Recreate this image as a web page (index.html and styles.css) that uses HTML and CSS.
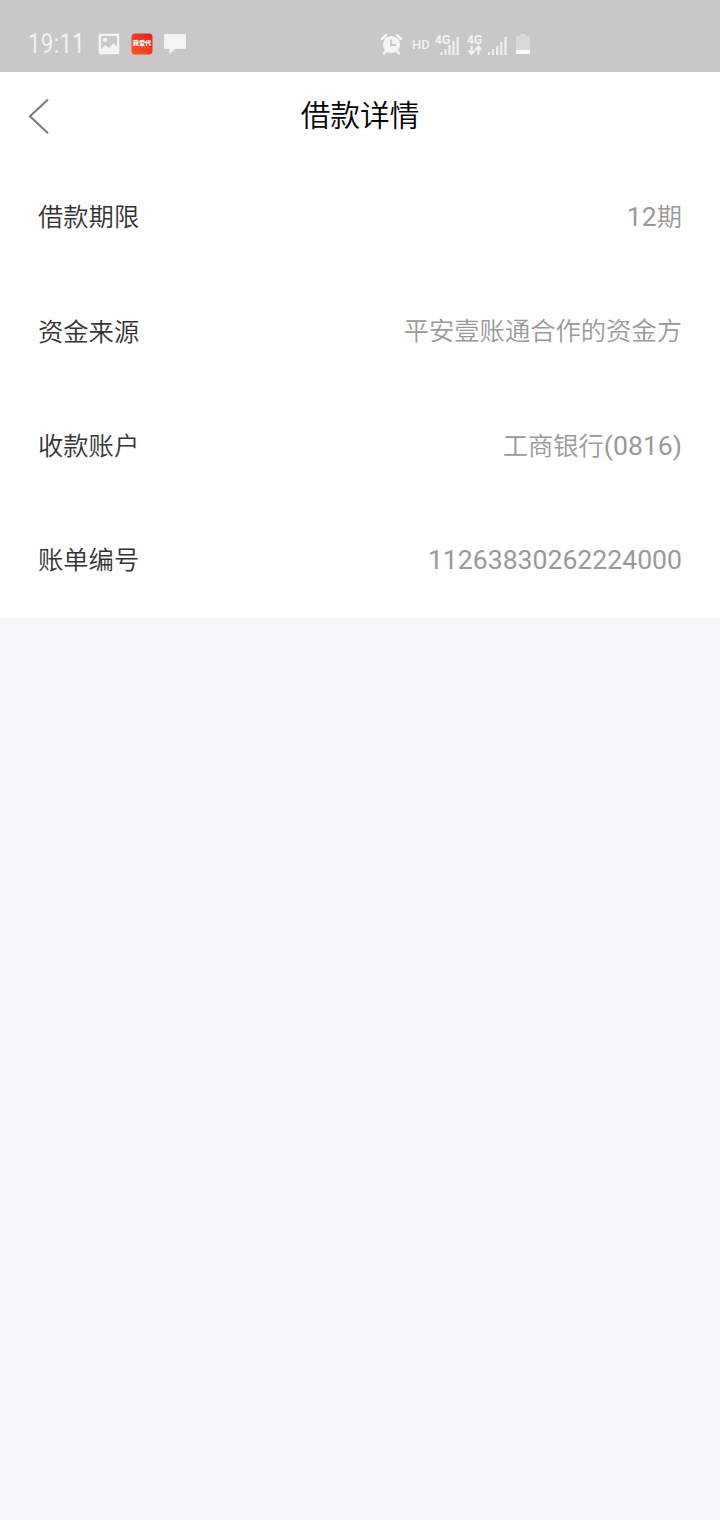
FILE: index.html
```html
<!DOCTYPE html>
<html lang="zh-CN">
<head>
  <meta charset="UTF-8">
  <meta name="viewport" content="width=device-width, initial-scale=1.0">
  <title>借款详情</title>
  <link rel="stylesheet" href="styles.css">
</head>
<body>
  <div class="status-bar">
    <div class="status-left">
      <span class="time">19:11</span>
      <svg class="icon-photo" width="22" height="22" viewBox="0 0 22 22">
        <path fill="#f3f3f3" fill-rule="evenodd" d="M2.200 0.800h17.600a1.500 1.500 0 0 1 1.500 1.500v17.400a1.500 1.500 0 0 1-1.500 1.500H2.200a1.500 1.500 0 0 1-1.500-1.500V2.300A1.500 1.500 0 0 1 2.200 0.800zM3 3v13l4.500-4 3.500 3 4.500-5 3.500 4V3z"/>
        <circle cx="7" cy="7" r="2.2" fill="#f3f3f3"/>
      </svg>
      <svg class="icon-app" width="22" height="22" viewBox="0 0 22 22">
        <defs>
          <linearGradient id="appBg" x1="0" y1="1" x2="1" y2="0">
            <stop offset="0" stop-color="#fb5a1c"/>
            <stop offset="1" stop-color="#e51c20"/>
          </linearGradient>
        </defs>
        <rect x="0.5" y="0.5" width="21" height="21" rx="3.5" fill="url(#appBg)"/>
        <text x="11" y="11.8" text-anchor="middle" class="app-name">我爱代</text>
        <path d="M4 14.7h14" stroke="#ff9377" stroke-width="0.6" stroke-dasharray="1.5 1.5"/>
      </svg>
      <svg class="icon-chat" width="24" height="22" viewBox="0 0 24 22">
        <path fill="#f3f3f3" d="M2.500 1h19A1.500 1.500 0 0 1 23 2.500v12a1.500 1.500 0 0 1-1.500 1.500H12l-5.500 5.500V16h-4A1.500 1.500 0 0 1 1 14.500v-12A1.500 1.500 0 0 1 2.500 1z"/>
      </svg>
    </div>
    <div class="status-right">
      <svg class="icon-alarm" width="24" height="22" viewBox="0 0 24 22">
        <circle cx="11.500" cy="11.500" r="8.600" fill="#f5f5f5"/>
        <path d="M1.800 6l4.200-4M21.200 6l-4.200-4M6 18l-2 2.500M17 18l2 2.500" stroke="#f5f5f5" stroke-width="2.500" stroke-linecap="round"/>
        <path d="M11 6.500v5.500h5" fill="none" stroke="#c8c8c8" stroke-width="1.800"/>
      </svg>
      <span class="hd">HD</span>
      <svg class="icon-signal" width="26" height="24" viewBox="0 0 26 24">
        <text x="0" y="12" class="network">4G</text>
        <path d="M6.500 23v-3M10.500 23v-6M14.500 23v-10M18.500 23v-14M22.700 23v-18" stroke="#f0f0f0" stroke-width="2.200"/>
      </svg>
      <svg class="icon-data" width="42" height="24" viewBox="0 0 42 24">
        <text x="0" y="12" class="network">4G</text>
        <path d="M4.500 14v7M1.500 18.500l3 3.500 3-3.500M11.500 22.500v-7M8.500 18l3-3.500 3 3.500" fill="none" stroke="#f3f3f3" stroke-width="2"/>
        <path d="M22 23v-3M26 23v-6M30.200 23v-9M34.300 23v-13M38.500 23v-18" stroke="#f0f0f0" stroke-width="2.200"/>
      </svg>
      <svg class="icon-battery" width="16" height="22" viewBox="0 0 16 22">
        <path fill="#dadada" d="M5 1h6v2h2.500A1.500 1.500 0 0 1 15 4.500V17H1V4.500A1.500 1.500 0 0 1 2.500 3H5z"/>
        <path fill="#fafafa" d="M1 17h14v3a1 1 0 0 1-1 1H2a1 1 0 0 1-1-1z"/>
      </svg>
    </div>
  </div>

  <header class="header">
    <svg class="back" width="24" height="38" viewBox="0 0 24 38">
      <path d="M21 2.500L3 19.300l18 17" fill="none" stroke="#7c7c7c" stroke-width="2.100"/>
    </svg>
    <h1 class="title">借款详情</h1>
  </header>

  <div class="list">
    <div class="row">
      <span class="label">借款期限</span>
      <span class="value"><span class="num">12</span>期</span>
    </div>
    <div class="row">
      <span class="label">资金来源</span>
      <span class="value">平安壹账通合作的资金方</span>
    </div>
    <div class="row">
      <span class="label">收款账户</span>
      <span class="value">工商银行<span class="num">(0816)</span></span>
    </div>
    <div class="row">
      <span class="label">账单编号</span>
      <span class="value"><span class="num">11263830262224000</span></span>
    </div>
  </div>
</body>
</html>
```
FILE: styles.css
```css
body {
  margin: 0;
  min-height: 100vh;
  background-color: #f6f7f9;
  font-family: Roboto, "Noto Sans CJK SC DemiLight", "Noto Sans CJK SC", sans-serif;
}

.status-bar {
  display: flex;
  height: 72px;
  padding-top: 16px;
  box-sizing: border-box;
  background-color: #c8c8c8;
  color: #f3f3f3;
}

.status-left,
.status-right {
  display: flex;
  align-items: center;
}

.status-left {
  width: 352px;
  padding-left: 28px;
}

.time {
  width: 70px;
  font-size: 27px;
  font-weight: 400;
  letter-spacing: 0.5px;
  white-space: nowrap;
  transform: scaleX(0.82);
  transform-origin: left center;
}

.icon-app {
  margin-left: 11px;
}

.icon-chat {
  margin-left: 10px;
}

.app-name {
  font-family: "Noto Sans CJK SC", sans-serif;
  font-size: 6.2px;
  font-weight: 900;
  fill: #fff;
}

.hd {
  width: 23px;
  margin-left: 8px;
  font-size: 13px;
  font-weight: 500;
}

.network {
  font-size: 12px;
  font-weight: 700;
  fill: #f3f3f3;
}

.icon-data {
  margin-left: 6px;
}

.icon-battery {
  margin-left: 6px;
}

.header {
  display: grid;
  grid-template-columns: 120px 1fr 120px;
  align-items: center;
  height: 88px;
  background-color: #fff;
}

.back {
  margin-left: 27px;
}

.title {
  margin: 0;
  color: #000;
  font-size: 29.7px;
  font-weight: 400;
  line-height: 44px;
  text-align: center;
}

.list {
  padding: 0 38px;
  background-color: #fff;
}

.row {
  display: flex;
  justify-content: space-between;
  align-items: center;
  height: 114.4px;
  font-size: 25.3px;
  line-height: 39px;
}

.label {
  padding-top: 1px;
  color: #333;
}

.value {
  color: #999;
}

.num {
  font-size: 26.6px;
}
```
